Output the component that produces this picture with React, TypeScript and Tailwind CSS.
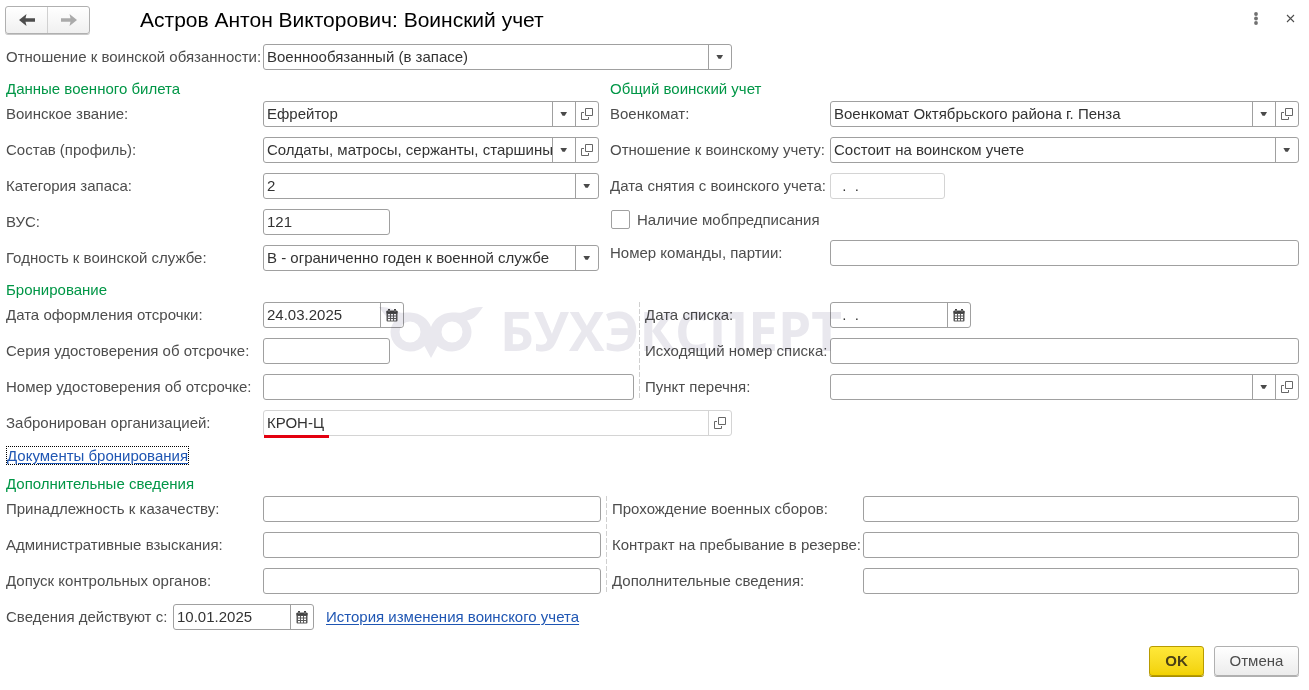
import React from 'react';

type FieldProps = {
  id: string;
  label: string;
  value?: string;
  options?: string[];
  kind?: 'text' | 'select' | 'date';
  open?: boolean;
  muted?: boolean;
  labelClass: string;
  boxClass?: string;
};

const ArrowIcon = () => (
  <svg width="8" height="4" viewBox="0 0 8 4" aria-hidden="true">
    <path d="M0.4 0H7L4.8 3.8H2.6Z" fill="#4a4a4a" />
  </svg>
);

const OpenIcon = () => (
  <svg width="12" height="12" viewBox="0 0 12 12" fill="none" stroke="#666" aria-hidden="true">
    <path d="M4.5 0.5H11.5V7.5H4.5Z" />
    <path d="M3 4.5H0.5V11.5H7.5V9" />
  </svg>
);

const CalendarIcon = () => (
  <svg width="12" height="13" viewBox="0 0 12 13" aria-hidden="true">
    <rect x="0.5" y="1.5" width="11" height="11" rx="1" fill="#5a5a5a" />
    <path d="M0.5 2H11.5V4.5H0.5ZM2 0H4V3H2ZM8 0H10V3H8Z" fill="#444" />
    <path d="M3 1V3M9 1V3" stroke="#aaa" strokeWidth="0.7" />
    <path
      d="M2 5H4V6.6H2ZM5 5H7V6.6H5ZM8 5H10V6.6H8ZM2 7.5H4V9.1H2ZM5 7.5H7V9.1H5ZM8 7.5H10V9.1H8ZM2 10H4V11.6H2ZM5 10H7V11.6H5ZM8 10H10V11.6H8Z"
      fill="#fff"
    />
  </svg>
);

const Field: React.FC<FieldProps> = ({
  id,
  label,
  value = '',
  options,
  kind = 'text',
  open,
  muted,
  labelClass,
  boxClass = 'flex-1',
}) => {
  const border = muted ? 'border-[#d4d4d4]' : 'border-[#a0a0a0]';
  const cell = `flex w-[23px] shrink-0 items-center justify-center border-l ${border}`;

  return (
    <div className="flex h-[26px] items-center">
      <label htmlFor={id} className={`shrink-0 whitespace-nowrap ${labelClass}`}>
        {label}
      </label>
      <div className={`flex h-[26px] min-w-0 rounded-[3px] border bg-white text-[#333] ${border} ${boxClass}`}>
        {kind === 'select' ? (
          <>
            <select
              id={id}
              defaultValue={value}
              className="w-full min-w-0 flex-1 appearance-none bg-transparent pr-[23px] pl-[3px] outline-none"
            >
              {(options ?? [value]).map((option) => (
                <option key={option}>{option}</option>
              ))}
            </select>
            <span className={`pointer-events-none -ml-[23px] ${cell}`}>
              <ArrowIcon />
            </span>
          </>
        ) : (
          <input
            id={id}
            type="text"
            defaultValue={value}
            readOnly={muted}
            className="w-full min-w-0 flex-1 bg-transparent px-[3px] outline-none"
          />
        )}
        {kind === 'date' && (
          <button type="button" aria-label="Выбрать дату" className={cell}>
            <CalendarIcon />
          </button>
        )}
        {open && (
          <button type="button" aria-label="Открыть" className={cell}>
            <OpenIcon />
          </button>
        )}
      </div>
    </div>
  );
};

const SectionTitle: React.FC<{ children: React.ReactNode }> = ({ children }) => (
  <h2 className="mt-[9px] mb-0.5 h-5 text-[#009646]">{children}</h2>
);

const DashedLine = () => (
  <div className="w-px shrink-0 bg-[repeating-linear-gradient(to_bottom,#d0d0d0_0_5px,transparent_5px_7px)]" />
);

const Watermark = () => (
  <div
    aria-hidden="true"
    className="pointer-events-none absolute top-[5px] left-[373px] flex items-start gap-[17px] text-[#e9e8ee] mix-blend-multiply"
  >
    <svg width="104" height="52" viewBox="0 0 104 52" fill="currentColor">
      <path
        fillRule="evenodd"
        d="M0 0C8 0 12 1 17 4C21 6.5 25 5.5 31 5.5C42 6 49 12 52 20C55 12 62 6 73 5.5C79 5.5 83 6.5 87 4C92 1 96 0 104 0C99 7 96 12 88 13.5C91 17 92.5 21 92.5 25A19.5 19.5 0 0 1 73 44.5C67 44.5 62 42.5 58.5 39L52 51L45.500 39C42 42.500 37 44.500 31 44.500A19.500 19.500 0 0 1 11.500 25C11.500 21 13 17 16 13.500C8 12 5 7 0 0ZM31 14.500A10.500 10.500 0 1 0 31 35.500A10.500 10.500 0 1 0 31 14.500ZM73 14.500A10.500 10.500 0 1 0 73 35.500A10.500 10.500 0 1 0 73 14.500Z"
      />
    </svg>
    <span className="font-['Open_Sans',sans-serif] text-[53px] leading-[48px] font-bold">БУХЭКСПЕРТ</span>
  </div>
);

export default function App() {
  return (
    <main className="bg-white pr-2.5 pb-3.5 pl-1.5 font-['Liberation_Sans',Arial,sans-serif] text-[15px] leading-5 text-[#4d4d4d]">
      <header className="flex h-11 items-start pt-1.5">
        <div className="-ml-px flex h-7 w-[85px] rounded-[3px] border border-[#b0b0b0] bg-linear-to-b from-white to-[#f0f0f0] shadow-[0_1px_0_#c8c8c8]">
          <button type="button" aria-label="Назад" className="flex flex-1 items-center justify-center border-r border-[#d0d0d0]">
            <svg width="16" height="12" viewBox="0 0 16 12" fill="#4d4d4d">
              <path d="M0 6L7.500 0L6.500 4.300H16V7.700H6.500L7.500 12Z" />
            </svg>
          </button>
          <button type="button" aria-label="Вперед" className="flex flex-1 items-center justify-center">
            <svg width="16" height="12" viewBox="0 0 16 12" fill="#aaa">
              <path d="M16 6L8.500 0L9.500 4.300H0V7.700H9.500L8.500 12Z" />
            </svg>
          </button>
        </div>
        <h1 className="ml-[50px] flex-1 text-[21px] leading-7 text-black">Астров Антон Викторович: Воинский учет</h1>
        <button type="button" aria-label="Меню" className="mt-1.5 mr-7">
          <svg width="4" height="14" viewBox="0 0 4 14" fill="#707070">
            <circle cx="2" cy="2" r="1.9" />
            <circle cx="2" cy="6.500" r="1.900" />
            <circle cx="2" cy="11" r="1.9" />
          </svg>
        </button>
        <button type="button" aria-label="Закрыть" className="mt-2 mr-1">
          <svg width="9" height="9" viewBox="0 0 9 9" stroke="#4d4d4d" strokeWidth="1.1">
            <path d="M1 1L8 8M8 1L1 8" />
          </svg>
        </button>
      </header>

      <Field id="duty" label="Отношение к воинской обязанности:" value="Военнообязанный (в запасе)" kind="select" labelClass="w-[257px]" boxClass="w-[469px]" />

      <div className="grid grid-cols-[593fr_689fr] gap-[11px]">
        <section>
          <SectionTitle>Данные военного билета</SectionTitle>
          <div className="flex flex-col gap-2.5">
            <Field id="rank" label="Воинское звание:" value="Ефрейтор" kind="select" open labelClass="w-[257px]" />
            <Field id="profile" label="Состав (профиль):" value="Солдаты, матросы, сержанты, старшины" kind="select" open labelClass="w-[257px]" />
            <Field id="category" label="Категория запаса:" value="2" kind="select" labelClass="w-[257px]" />
            <Field id="vus" label="ВУС:" value="121" labelClass="w-[257px]" boxClass="w-[127px]" />
            <Field id="fitness" label="Годность к воинской службе:" value="В - ограниченно годен к военной службе" kind="select" labelClass="w-[257px]" />
          </div>
        </section>
        <section>
          <SectionTitle>Общий воинский учет</SectionTitle>
          <div className="flex flex-col gap-2.5">
            <Field id="office" label="Военкомат:" value="Военкомат Октябрьского района г. Пенза" kind="select" open labelClass="w-[220px]" />
            <Field id="registration" label="Отношение к воинскому учету:" value="Состоит на воинском учете" kind="select" labelClass="w-[220px]" />
            <Field id="removed" label="Дата снятия с воинского учета:" value="  .  ." muted labelClass="w-[220px]" boxClass="w-[115px]" />
            <div className="flex h-[21px] items-center">
              <input
                id="mob"
                type="checkbox"
                className="ml-px size-[19px] appearance-none rounded-[2px] border border-[#a0a0a0] bg-white checked:bg-[#4d4d4d]"
              />
              <label htmlFor="mob" className="ml-[7px]">Наличие мобпредписания</label>
            </div>
            <Field id="team" label="Номер команды, партии:" labelClass="w-[220px]" />
          </div>
        </section>
      </div>

      <section>
        <SectionTitle>Бронирование</SectionTitle>
        <div className="relative grid grid-cols-[628fr_660fr] gap-[5px]">
          <div className="flex flex-col gap-2.5">
            <Field id="deferral-date" label="Дата оформления отсрочки:" value="24.03.2025" kind="date" labelClass="w-[257px]" boxClass="w-[141px]" />
            <Field id="deferral-series" label="Серия удостоверения об отсрочке:" labelClass="w-[257px]" boxClass="w-[127px]" />
            <Field id="deferral-number" label="Номер удостоверения об отсрочке:" labelClass="w-[257px]" />
          </div>
          <div className="flex gap-[5px]">
            <DashedLine />
            <div className="flex min-w-0 flex-1 flex-col gap-2.5">
              <Field id="list-date" label="Дата списка:" value="  .  ." kind="date" labelClass="w-[185px]" boxClass="w-[141px]" />
              <Field id="list-number" label="Исходящий номер списка:" labelClass="w-[185px]" />
              <Field id="list-item" label="Пункт перечня:" kind="select" open labelClass="w-[185px]" />
            </div>
          </div>
          <Watermark />
        </div>
        <div className="relative mt-2.5">
          <Field id="company" label="Забронирован организацией:" value="КРОН-Ц" open muted labelClass="w-[257px]" boxClass="w-[469px]" />
          <span className="absolute top-[25px] left-[258px] h-[3px] w-[65px] bg-[#e3000f]" />
        </div>
        <div className="mt-2.5 flex h-[19px]">
          <a href="#documents" className="border border-dotted border-black leading-[18px] text-[#1f56b3] underline underline-offset-2">
            Документы бронирования
          </a>
        </div>
      </section>

      <section>
        <SectionTitle>Дополнительные сведения</SectionTitle>
        <div className="grid grid-cols-[595fr_693fr] gap-[5px]">
          <div className="flex flex-col gap-2.5">
            <Field id="cossack" label="Принадлежность к казачеству:" labelClass="w-[257px]" />
            <Field id="penalties" label="Административные взыскания:" labelClass="w-[257px]" />
            <Field id="clearance" label="Допуск контрольных органов:" labelClass="w-[257px]" />
          </div>
          <div className="flex gap-[5px]">
            <DashedLine />
            <div className="flex min-w-0 flex-1 flex-col gap-2.5">
              <Field id="training" label="Прохождение военных сборов:" labelClass="w-[251px]" />
              <Field id="contract" label="Контракт на пребывание в резерве:" labelClass="w-[251px]" />
              <Field id="extra" label="Дополнительные сведения:" labelClass="w-[251px]" />
            </div>
          </div>
        </div>
      </section>

      <div className="mt-2.5 flex items-center gap-3">
        <Field id="valid-from" label="Сведения действуют с:" value="10.01.2025" kind="date" labelClass="w-[167px]" boxClass="w-[141px]" />
        <a href="#history" className="text-[#1f56b3] underline underline-offset-2">История изменения воинского учета</a>
      </div>

      <footer className="mt-4 flex justify-end gap-2.5">
        <button type="button" className="h-[30px] w-[55px] rounded-[3px] border border-[#b89b00] bg-linear-to-b from-[#ffe838] to-[#f2d200] font-bold text-[#4a4016] shadow-[0_1px_0_#a89000]">
          OK
        </button>
        <button type="button" className="h-[30px] w-[85px] rounded-[3px] border border-[#b0b0b0] bg-linear-to-b from-white to-[#ececec] shadow-[0_1px_0_#b0b0b0]">
          Отмена
        </button>
      </footer>
    </main>
  );
}
